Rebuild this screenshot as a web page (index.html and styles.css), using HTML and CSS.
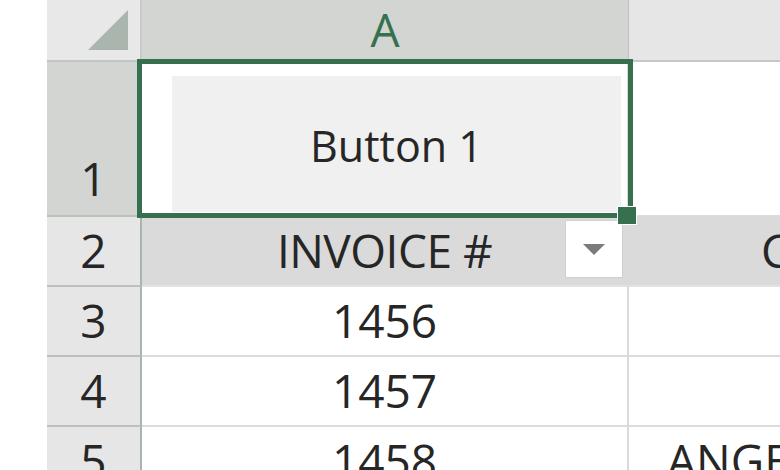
FILE: index.html
```html
<!DOCTYPE html>
<html>
<head>
<meta charset="utf-8">
<link rel="stylesheet" href="styles.css">
</head>
<body>
<div class="sheet">
  <div class="corner"><svg class="tri" width="42" height="42" viewBox="0 0 42 42"><polygon points="1,41 41,1 41,41" fill="#aab5ae"/></svg></div>
  <div class="colhead sel">A</div>
  <div class="colhead">&nbsp;</div>

  <div class="rowhead sel r1">1</div>
  <div class="cell a1"><div class="btn">Button 1</div></div>
  <div class="cell b1"></div>

  <div class="rowhead">2</div>
  <div class="cell hdr">INVOICE #<span class="dd"><svg width="22" height="11" viewBox="0 0 22 11"><polygon points="0,0 22,0 11,11" fill="#7b7b7b"/></svg></span></div>
  <div class="cell hdr colb c2">CUSTOMER</div>

  <div class="rowhead">3</div>
  <div class="cell">1456</div>
  <div class="cell colb"></div>

  <div class="rowhead">4</div>
  <div class="cell">1457</div>
  <div class="cell colb"></div>

  <div class="rowhead">5</div>
  <div class="cell">1458</div>
  <div class="cell colb c5">ANGELA</div>

  <div class="selbox"></div>
  <div class="handle"></div>
</div>
</body>
</html>
```
FILE: styles.css
```css
html, body {
  margin: 0;
  padding: 0;
  background: #ffffff;
  overflow: hidden;
}
.sheet {
  position: relative;
  margin-left: 47px;
  width: 733px;
  height: 470px;
  display: grid;
  grid-template-columns: 95px 487px 1fr;
  grid-template-rows: 62px 155px 70px 70px 70px 70px;
  font-family: "Open Sans", "Noto Sans", sans-serif;
  font-weight: 500;
  color: #262626;
  font-size: 46px;
  overflow: hidden;
}
.corner {
  background: #e8e8e8;
  border-right: 2px solid #c9cbc9;
  border-bottom: 2px solid #c2c6c3;
  box-sizing: border-box;
  display: flex;
  align-items: flex-end;
  justify-content: flex-end;
  padding: 0 11px 9px 0;
}
.tri { display: block; }
.colhead {
  background: #e6e6e6;
  border-bottom: 2px solid #c6c8c6;
  border-right: 1px solid #c9c9c9;
  box-sizing: border-box;
  display: flex;
  align-items: center;
  justify-content: center;
  line-height: 1;
  padding-bottom: 2px;
}
.colhead.sel {
  background: #d3d5d3;
  color: #36704e;
  border-right: 1px solid #bfc3c0;
}
.rowhead {
  background: #e6e6e6;
  border-right: 2px solid #a6b6ab;
  border-bottom: 2px solid #bdc1be;
  box-sizing: border-box;
  display: flex;
  align-items: center;
  justify-content: center;
  line-height: 1;
  padding-bottom: 2px;
}
.rowhead.sel {
  background: #d3d5d3;
  align-items: flex-end;
  padding-bottom: 14px;
}
.cell {
  position: relative;
  background: #ffffff;
  border-right: 2px solid #dadada;
  border-bottom: 2px solid #dcdcdc;
  box-sizing: border-box;
  display: flex;
  align-items: center;
  justify-content: center;
  line-height: 1;
  padding-bottom: 2px;
  white-space: nowrap;
}
.cell.colb {
  border-right: none;
  justify-content: flex-start;
}
.cell.a1 {
  padding: 14px 6px 5px 30px;
  align-items: stretch;
  border-bottom: none;
}
.btn {
  flex: 1;
  background: #f0f0f0;
  display: flex;
  align-items: center;
  justify-content: center;
  font-size: 43px;
  padding-top: 2px;
}
.cell.hdr {
  background: #d9dad9;
  border-bottom: 2px solid #e2e2e2;
  letter-spacing: -0.5px;
}
.c2 { padding-left: 132px; }
.c5 { padding-left: 38px; }
.dd {
  position: absolute;
  right: 4px;
  top: 3px;
  width: 58px;
  height: 58px;
  box-sizing: border-box;
  background: #ffffff;
  border: 1px solid #d0d0d0;
  display: flex;
  align-items: center;
  justify-content: center;
}
.dd svg { display: block; }
.selbox {
  position: absolute;
  left: 90px;
  top: 59px;
  width: 496px;
  height: 159px;
  box-sizing: border-box;
  border: 5px solid #36704e;
}
.handle {
  position: absolute;
  left: 571px;
  top: 207px;
  width: 18px;
  height: 17px;
  background: #36704e;
  box-shadow: 0 0 0 1px #ffffff;
}
```
